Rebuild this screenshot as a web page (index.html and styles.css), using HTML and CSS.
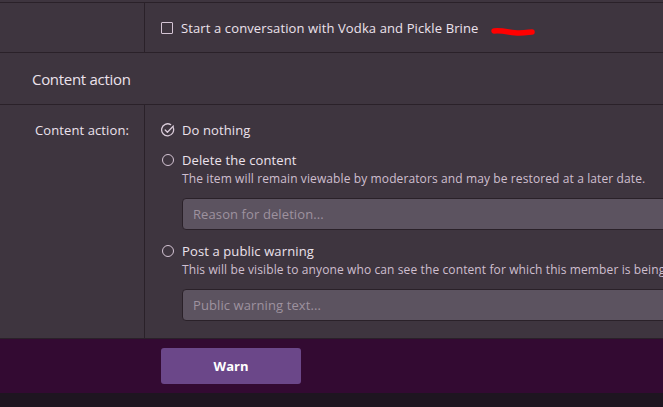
FILE: index.html
```
<!DOCTYPE html>
<html>
<head>
<meta charset="utf-8">
<link rel="stylesheet" href="styles.css">
</head>
<body>
<div class="top-gap"></div>
<div class="form-row row-conv">
  <div class="label-cell"></div>
  <div class="value-cell conv-cell">
    <label class="choice">
      <span class="checkbox"></span>
      <span class="choice-text">Start a conversation with Vodka and Pickle Brine</span>
    </label>
    <svg class="scribble" width="50" height="14" viewBox="0 0 50 14">
      <path d="M5 6 C 14 5, 22 8, 30 8 S 40 7, 43 7" stroke="#ff0000" stroke-width="5.5" fill="none" stroke-linecap="round"/>
    </svg>
  </div>
</div>
<div class="section-header">Content action</div>
<div class="form-row row-action">
  <div class="label-cell action-label">Content action:</div>
  <div class="value-cell action-cell">
    <div class="choice">
      <svg class="radio-icon" width="14" height="14" viewBox="0 0 14 14">
        <path d="M12.2 4.6 A6 6 0 1 1 9.6 1.6" stroke="#d9cbd9" stroke-width="1.3" fill="none" stroke-linecap="round"/>
        <path d="M4.2 7 L6.4 9.2 L12.4 3" stroke="#d9cbd9" stroke-width="1.3" fill="none" stroke-linecap="round" stroke-linejoin="round"/>
      </svg>
      <span class="choice-text">Do nothing</span>
    </div>
    <div class="choice choice-gap">
      <span class="radio"></span>
      <span class="choice-text">Delete the content</span>
    </div>
    <div class="hint">The item will remain viewable by moderators and may be restored at a later date.</div>
    <div class="input">Reason for deletion...</div>
    <div class="choice choice-gap2">
      <span class="radio"></span>
      <span class="choice-text">Post a public warning</span>
    </div>
    <div class="hint">This will be visible to anyone who can see the content for which this member is being warned.</div>
    <div class="input">Public warning text...</div>
  </div>
</div>
<div class="footer">
  <button class="warn-btn">Warn</button>
</div>
<div class="bottom-band"></div>
</body>
</html>
```
FILE: styles.css
```
html, body {
  margin: 0;
  padding: 0;
  overflow: hidden;
}
html {
  background: #3e353f;
}
body {
  background: #3e353f;
  color: #ece2ec;
  font-family: "Open Sans", "Noto Sans", sans-serif;
  font-size: 13px;
  height: 407px;
}
.top-gap {
  height: 2px;
  border-bottom: 1px solid #2a2129;
}
.form-row {
  display: grid;
  grid-template-columns: 145px minmax(0, 1fr);
  border-bottom: 1px solid #2a2129;
}
.label-cell {
  border-right: 1px solid #2a2129;
}
.row-conv {
  height: 49px;
}
.conv-cell {
  display: flex;
  align-items: center;
  padding-left: 16px;
}
.choice {
  display: flex;
  align-items: center;
  height: 20px;
  white-space: nowrap;
}
.checkbox {
  width: 10px;
  height: 10px;
  border: 1px solid #d4c4d4;
  border-radius: 1px;
  margin-right: 8px;
  flex: none;
}
.choice-text {
  letter-spacing: 0.12px;
}
.scribble {
  margin-left: 10px;
  margin-top: 9px;
}
.section-header {
  height: 51px;
  border-bottom: 1px solid #2a2129;
  display: flex;
  align-items: center;
  padding-left: 32px;
  font-size: 15px;
  letter-spacing: -0.3px;
}
.row-action {
  height: 233px;
}
.action-label {
  text-align: right;
  padding-right: 15px;
  padding-top: 15px;
  line-height: 20px;
  letter-spacing: 0.1px;
}
.action-cell {
  padding-left: 16px;
  padding-top: 15px;
  overflow: hidden;
}
.radio-icon {
  margin-right: 7px;
  flex: none;
}
.radio {
  width: 10px;
  height: 10px;
  border: 1.5px solid #d4c4d4;
  border-radius: 50%;
  margin-right: 8px;
  flex: none;
  margin-left: 1px;
}
.choice-gap {
  margin-top: 10px;
}
.choice-gap2 {
  margin-top: 11px;
}
.hint {
  font-size: 12px;
  line-height: 18px;
  color: #cfbfcf;
  padding-left: 21px;
  white-space: nowrap;
  letter-spacing: 0.11px;
}
.input {
  margin-top: 10px;
  margin-left: 21px;
  height: 30px;
  width: 600px;
  background: #5c5360;
  border: 1px solid #2a2129;
  border-radius: 4px;
  color: #9e929f;
  font-size: 13px;
  line-height: 30px;
  padding-left: 10px;
  letter-spacing: 0.1px;
}
.footer {
  background: #330a32;
  height: 55px;
  padding-left: 161px;
  padding-top: 9px;
  box-sizing: border-box;
  border-bottom: 1px solid #1e1520;
}
.warn-btn {
  width: 140px;
  height: 36px;
  background: #6b4789;
  border: none;
  border-radius: 3px;
  color: #ffffff;
  font-family: "Open Sans", "Noto Sans", sans-serif;
  font-weight: bold;
  font-size: 13px;
  padding: 0;
}
.bottom-band {
  background: #1e1520;
  height: 20px;
}
```
